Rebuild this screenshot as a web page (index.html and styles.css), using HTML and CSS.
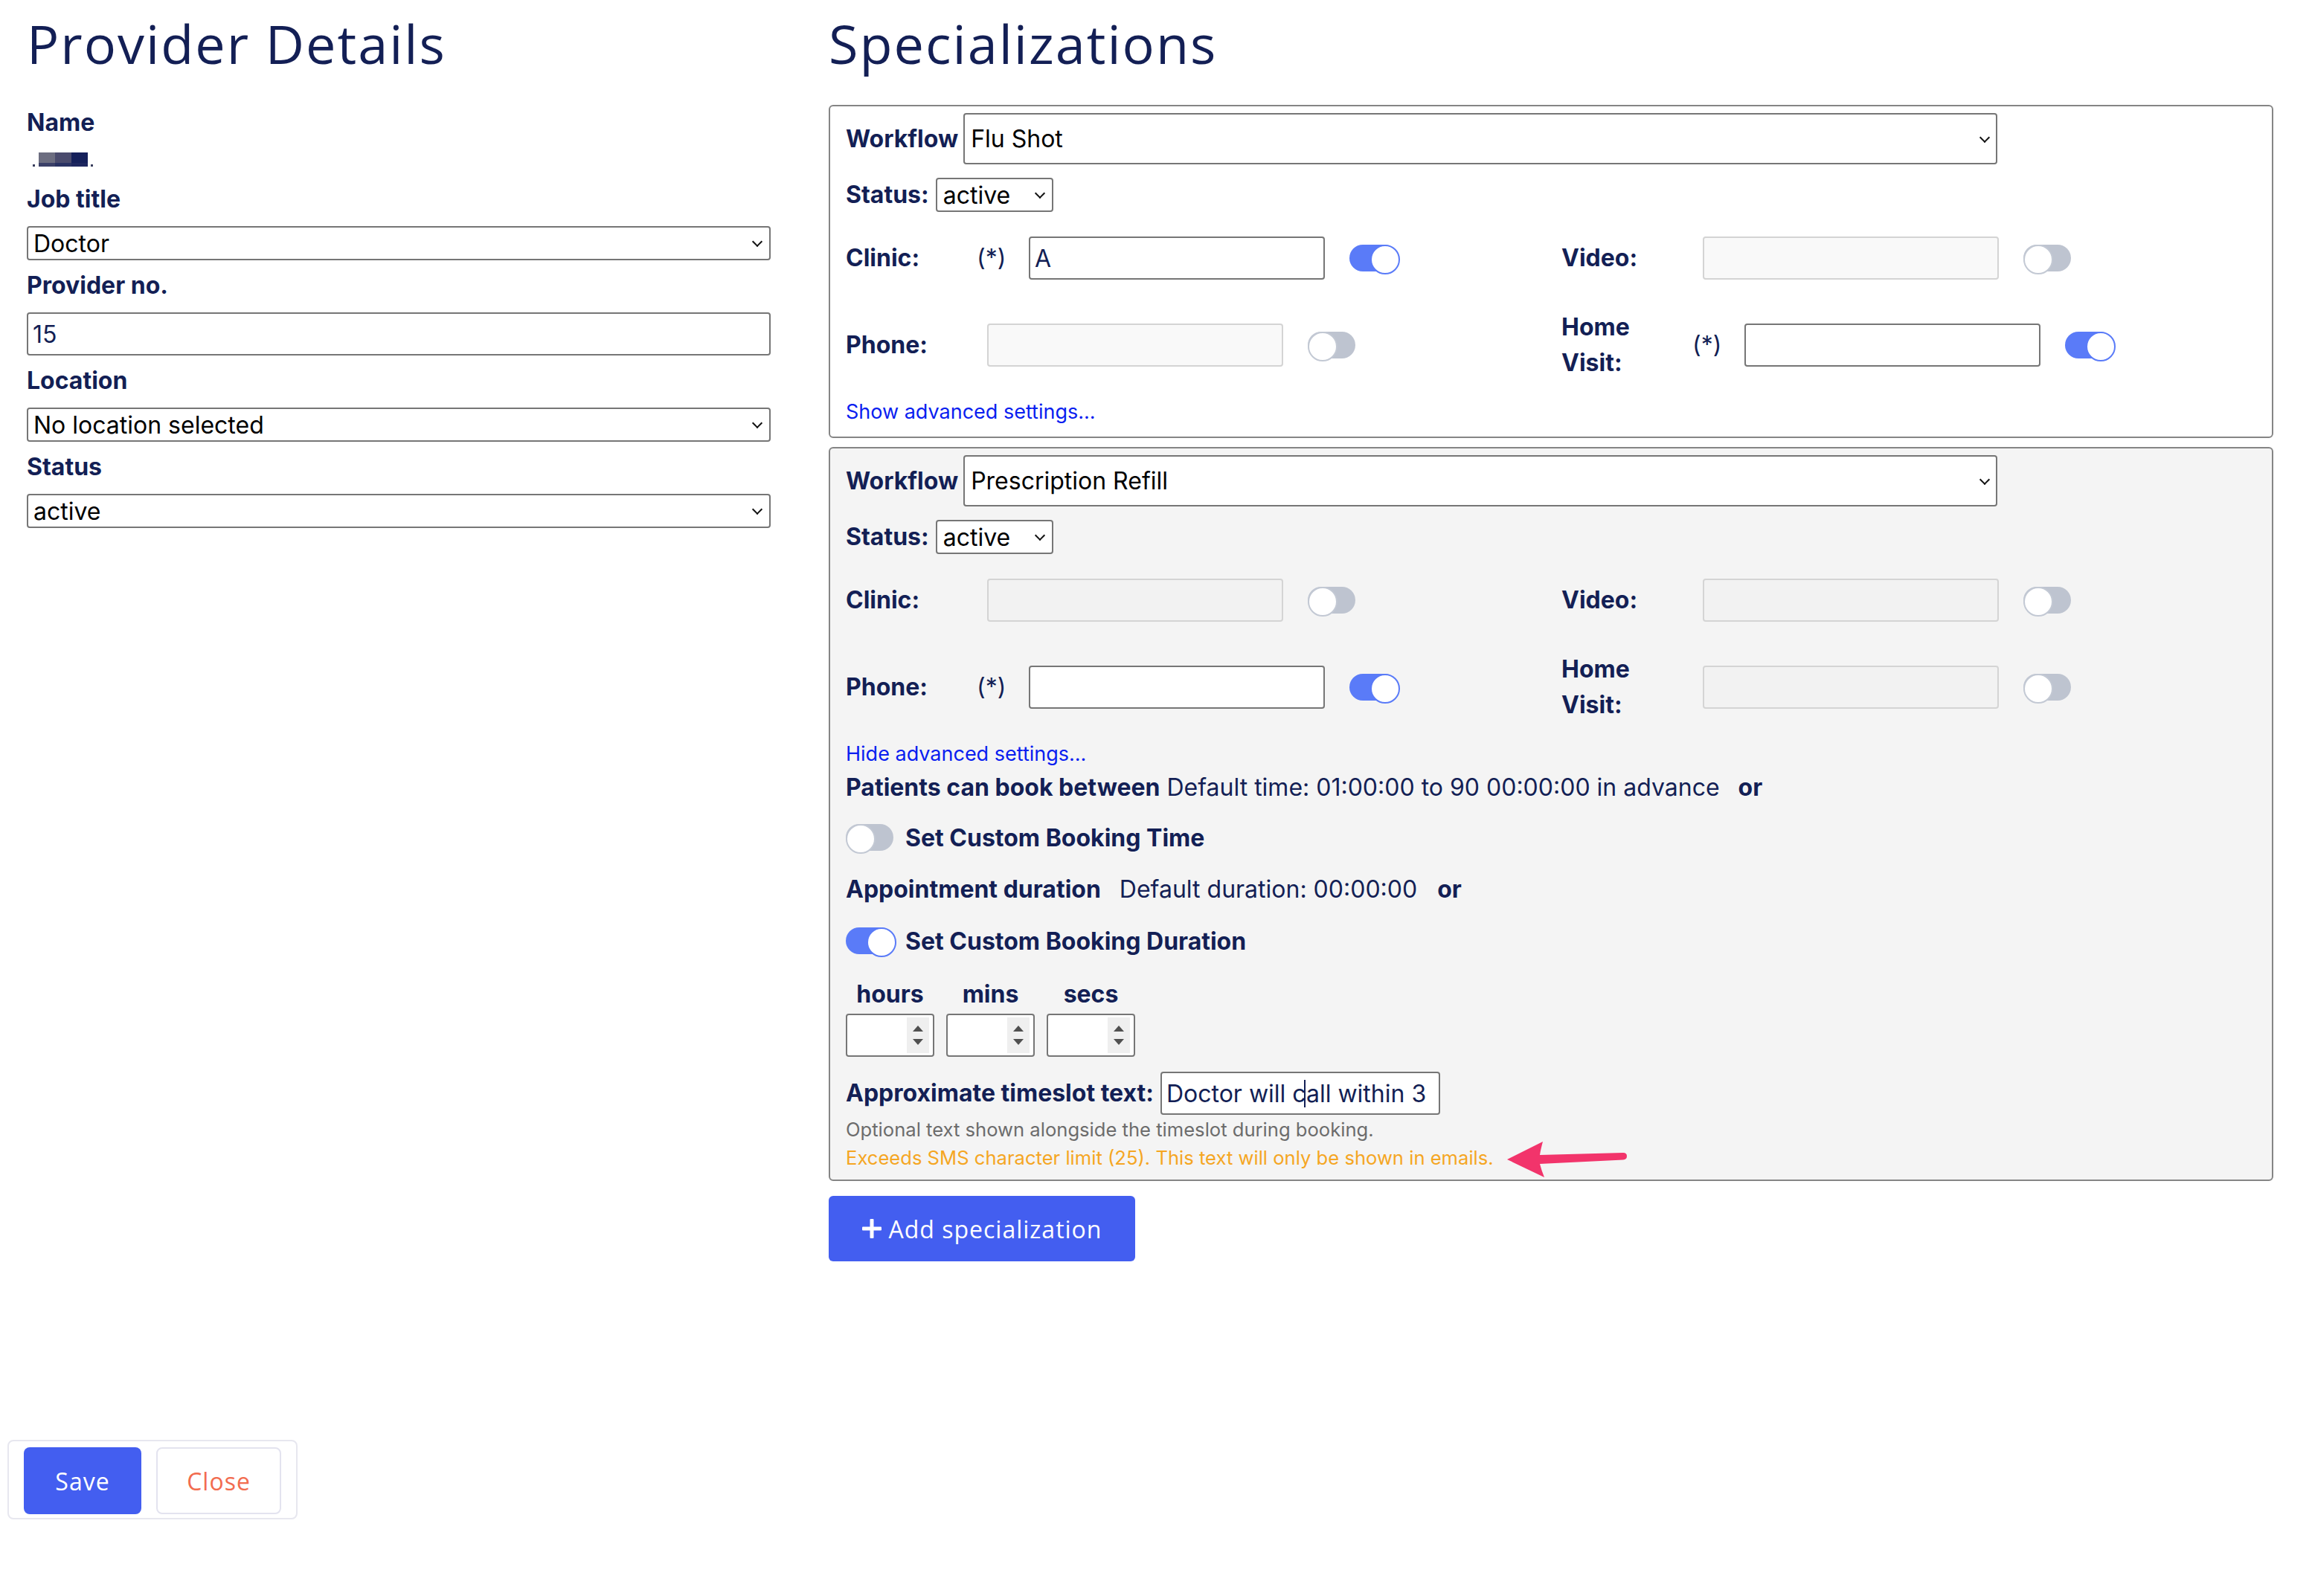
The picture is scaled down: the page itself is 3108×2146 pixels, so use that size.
FILE: index.html
```html
<!DOCTYPE html>
<html lang="en">
<head>
<meta charset="utf-8">
<title>Provider Details</title>
<link rel="stylesheet" href="styles.css">
</head>
<body>
<div class="page">
  <main class="layout">
    <!-- Left column: provider form -->
    <section class="details">
      <h1 class="title">Provider Details</h1>

      <div class="label label-name">Name</div>
      <div class="name-value" aria-label="Name (hidden)">
        <span class="dot"></span><span class="blk b1"></span><span class="blk b2"></span><span class="blk b3"></span><span class="dot"></span>
      </div>

      <label class="label" for="job">Job title</label>
      <div class="sel"><select id="job" class="select"><option>Doctor</option></select></div>

      <label class="label" for="provno">Provider no.</label>
      <input id="provno" class="text-input" value="15">

      <label class="label" for="loc">Location</label>
      <div class="sel"><select id="loc" class="select"><option>No location selected</option></select></div>

      <label class="label" for="status">Status</label>
      <div class="sel"><select id="status" class="select"><option>active</option></select></div>
    </section>

    <!-- Right column: specializations -->
    <section class="specs">
      <h1 class="title">Specializations</h1>

      <div class="card">
        <div class="wf-row">
          <span class="inline-label">Workflow</span>
          <div class="sel wf"><select class="select"><option>Flu Shot</option></select></div>
        </div>
        <div class="status-row">
          <span class="inline-label">Status:</span>
          <div class="sel small"><select class="select"><option>active</option></select></div>
        </div>
        <div class="channels">
          <div class="channel">
            <span class="ch-label">Clinic:</span>
            <span class="req">(*)</span>
            <input class="ch-input" value="A">
            <span class="switch on"></span>
          </div>
          <div class="channel">
            <span class="ch-label">Video:</span>
            <span class="opt"></span>
            <input class="ch-input" disabled>
            <span class="switch"></span>
          </div>
          <div class="channel">
            <span class="ch-label">Phone:</span>
            <span class="opt"></span>
            <input class="ch-input" disabled>
            <span class="switch"></span>
          </div>
          <div class="channel">
            <span class="ch-label">Home Visit:</span>
            <span class="req">(*)</span>
            <input class="ch-input">
            <span class="switch on"></span>
          </div>
        </div>
        <a class="adv-link" href="#">Show advanced settings...</a>
      </div>

      <div class="card muted">
        <div class="wf-row">
          <span class="inline-label">Workflow</span>
          <div class="sel wf"><select class="select"><option>Prescription Refill</option></select></div>
        </div>
        <div class="status-row">
          <span class="inline-label">Status:</span>
          <div class="sel small"><select class="select"><option>active</option></select></div>
        </div>
        <div class="channels">
          <div class="channel">
            <span class="ch-label">Clinic:</span>
            <span class="opt"></span>
            <input class="ch-input" disabled>
            <span class="switch"></span>
          </div>
          <div class="channel">
            <span class="ch-label">Video:</span>
            <span class="opt"></span>
            <input class="ch-input" disabled>
            <span class="switch"></span>
          </div>
          <div class="channel">
            <span class="ch-label">Phone:</span>
            <span class="req">(*)</span>
            <input class="ch-input">
            <span class="switch on"></span>
          </div>
          <div class="channel">
            <span class="ch-label">Home Visit:</span>
            <span class="opt"></span>
            <input class="ch-input" disabled>
            <span class="switch"></span>
          </div>
        </div>
        <a class="adv-link" href="#">Hide advanced settings...</a>

        <p class="book-line"><b>Patients can book between</b> Default time: 01:00:00 to 90 00:00:00 in advance <b class="or">or</b></p>

        <div class="toggle-line"><span class="switch"></span><span>Set Custom Booking Time</span></div>

        <p class="dur-line"><b>Appointment duration</b><span class="sp">Default duration: 00:00:00</span><b class="or">or</b></p>

        <div class="toggle-line toggle-duration"><span class="switch on"></span><span>Set Custom Booking Duration</span></div>

        <div class="hms">
          <div class="hms-col">
            <span class="hms-label">hours</span>
            <div class="num"><input type="number"><span class="spin"></span></div>
          </div>
          <div class="hms-col">
            <span class="hms-label">mins</span>
            <div class="num"><input type="number"><span class="spin"></span></div>
          </div>
          <div class="hms-col">
            <span class="hms-label">secs</span>
            <div class="num"><input type="number"><span class="spin"></span></div>
          </div>
        </div>

        <div class="approx">
          <span class="inline-label">Approximate timeslot text:</span>
          <div class="approx-field">
            <input class="approx-input" value="Doctor will call within 3 hours">
            <span class="caret"></span>
          </div>
        </div>
        <p class="hint">Optional text shown alongside the timeslot during booking.</p>
        <p class="warn">Exceeds SMS character limit (25). This text will only be shown in emails.<svg class="arrow" width="166" height="54" viewBox="0 0 166 54" aria-hidden="true"><path d="M2 27 L50 3 Q47 14 46 21 L158 18 Q163 18 163 22.5 Q163 27 158 27.5 L46 33 Q48 41 52 51 Z" fill="#f2346b"/></svg></p>
      </div>

      <button class="add-btn" type="button">
        <svg class="plus" width="26" height="26" viewBox="0 0 26 26" aria-hidden="true"><rect x="10.5" y="0" width="5" height="26" rx="1" fill="#fff"/><rect x="0" y="10.5" width="26" height="5" rx="1" fill="#fff"/></svg>
        <span>Add specialization</span>
      </button>
    </section>
  </main>

  <footer class="actions">
    <button class="btn btn-save" type="button">Save</button>
    <button class="btn btn-close" type="button">Close</button>
  </footer>
</div>
</body>
</html>
```

FILE: styles.css
```css
* {
  box-sizing: border-box;
}

body {
  margin: 0;
  background: #fff;
  color: #131f55;
  font-family: Inter, "Liberation Sans", sans-serif;
  font-size: 32px;
}

.page {
  min-height: 100vh;
  display: flex;
  flex-direction: column;
}

.layout {
  display: grid;
  grid-template-columns: 1000px 1fr;
  column-gap: 78px;
  align-items: start;
  padding: 14px 52px 0 36px;
}

.title {
  margin: 0 0 39px;
  font-family: "Open Sans", sans-serif;
  font-weight: 500;
  font-size: 72px;
  line-height: 88px;
  letter-spacing: 2px;
  color: #131f55;
}

/* ---------- left form ---------- */

.label {
  display: block;
  margin-bottom: 12px;
  font-weight: 700;
  font-size: 32px;
  line-height: 48px;
}

.label-name {
  margin-bottom: 0;
}

.name-value {
  height: 44px;
  margin-bottom: 11px;
  padding: 0 0 9px 8px;
  display: flex;
  align-items: flex-end;
}

.name-value .dot {
  width: 3px;
  height: 3px;
  background: #3a3f5e;
}

.name-value .dot:first-child {
  margin-right: 5px;
}

.name-value .dot:last-child {
  margin-left: 4px;
}

.name-value .blk {
  width: 22px;
  height: 19px;
}

.b1 { background: linear-gradient(#6c6d80 0 14px, #3b4068 14px); }
.b2 { background: linear-gradient(#4a4b6d 0 14px, #2a3263 14px); }
.b3 { background: linear-gradient(#15205a 0 14px, #1e275f 14px); }

.sel {
  position: relative;
  margin-bottom: 10px;
}

.sel::after {
  content: "";
  position: absolute;
  right: 13px;
  top: 50%;
  width: 8px;
  height: 8px;
  border-right: 2px solid #111;
  border-bottom: 2px solid #111;
  transform: translateY(-70%) rotate(45deg);
  pointer-events: none;
}

.select {
  -webkit-appearance: none;
  appearance: none;
  display: block;
  width: 100%;
  height: 46px;
  margin: 0;
  padding: 0 40px 0 7px;
  border: 2px solid #767676;
  border-radius: 4px;
  background: #fff;
  color: #000;
  font-family: Inter, "Liberation Sans", sans-serif;
  font-size: 32px;
}

.text-input {
  display: block;
  width: 100%;
  height: 58px;
  margin: 0 0 10px;
  padding: 0 6px;
  border: 2px solid #767676;
  border-radius: 4px;
  background: #fff;
  color: #131f55;
  font-family: Inter, "Liberation Sans", sans-serif;
  font-size: 32px;
}

/* ---------- specialization cards ---------- */

.card {
  border: 2px solid #858585;
  border-radius: 6px;
  padding: 9px 21px 13px;
  background: #fff;
}

.card + .card {
  margin-top: 12px;
}

.card.muted {
  background: #f4f4f4;
  padding-bottom: 10px;
}

.inline-label {
  font-weight: 700;
  font-size: 32px;
  line-height: 48px;
  white-space: nowrap;
}

.wf-row {
  display: flex;
  align-items: center;
  gap: 7px;
}

.sel.wf {
  width: 1390px;
  margin: 0;
}

.sel.wf .select {
  height: 69px;
  padding-left: 8px;
}

.sel.wf::after {
  right: 12px;
}

.status-row {
  display: flex;
  align-items: center;
  gap: 9px;
  margin-top: 17px;
}

.sel.small {
  width: 158px;
  margin: 0;
}

.sel.small .select {
  padding-left: 8px;
}

.channels {
  display: grid;
  grid-template-columns: 962px 1fr;
  row-gap: 21px;
  margin-top: 13px;
}

.channel {
  display: flex;
  align-items: center;
  min-height: 96px;
}

.ch-label {
  flex: 0 0 176px;
  padding-right: 30px;
  font-weight: 700;
  font-size: 32px;
  line-height: 48px;
}

.req {
  flex: 0 0 70px;
  font-size: 32px;
  line-height: 48px;
}

.opt {
  flex: 0 0 14px;
}

.ch-input {
  flex: none;
  width: 398px;
  height: 58px;
  margin: 0;
  padding: 0 6px;
  border: 2px solid #767676;
  border-radius: 4px;
  background: #fff;
  color: #131f55;
  font-family: Inter, "Liberation Sans", sans-serif;
  font-size: 32px;
}

.ch-input:disabled {
  border-color: #d4d4d4;
  background: rgba(239, 239, 239, 0.4);
}

.channel .switch {
  margin-left: 33px;
}

/* toggle switch */
.switch {
  position: relative;
  flex: none;
  display: inline-block;
  width: 64px;
  height: 36px;
  border-radius: 18px;
  background: #bec4d0;
}

.switch::after {
  content: "";
  position: absolute;
  top: 0;
  left: 0;
  width: 36px;
  height: 36px;
  border-radius: 50%;
  border: 2px solid #c3c9d4;
  background: #fff;
}

.switch.on {
  background: #5a7bf8;
}

.switch.on::after {
  left: 28px;
  border-color: #5a7bf8;
}

.adv-link {
  display: block;
  margin-top: 22px;
  font-size: 27px;
  line-height: 40px;
  color: #0a1ef0;
  text-decoration: none;
}

/* ---------- advanced settings ---------- */

.book-line {
  margin: 1px 0 0;
  font-size: 32px;
  line-height: 48px;
}

.or {
  margin-left: 16px;
}

.toggle-line {
  display: flex;
  align-items: center;
  gap: 16px;
  height: 48px;
  margin-top: 19px;
  font-weight: 700;
  font-size: 32px;
}

.toggle-line.toggle-duration {
  margin-top: 21px;
}

.dur-line {
  margin: 22px 0 0;
  font-size: 32px;
  line-height: 48px;
}

.dur-line .sp {
  margin-left: 25px;
}

.dur-line .or {
  margin-left: 27px;
}

.hms {
  display: flex;
  gap: 16px;
  margin-top: 24px;
}

.hms-col {
  width: 119px;
  display: flex;
  flex-direction: column;
  align-items: center;
}

.hms-label {
  font-weight: 700;
  font-size: 32px;
  line-height: 48px;
}

.num {
  position: relative;
  width: 119px;
  height: 58px;
  margin-top: 2px;
}

.num input {
  -moz-appearance: textfield;
  appearance: textfield;
  width: 100%;
  height: 100%;
  margin: 0;
  padding: 0 40px 0 6px;
  border: 2px solid #767676;
  border-radius: 4px;
  background: #fff;
  font-family: Inter, "Liberation Sans", sans-serif;
  font-size: 32px;
}

.num input::-webkit-inner-spin-button,
.num input::-webkit-outer-spin-button {
  -webkit-appearance: none;
  margin: 0;
}

.spin {
  position: absolute;
  top: 5px;
  bottom: 5px;
  right: 7px;
  width: 30px;
  background: #efefef;
  display: flex;
  flex-direction: column;
  justify-content: space-evenly;
  align-items: center;
}

.spin::before {
  content: "";
  border-left: 7px solid transparent;
  border-right: 7px solid transparent;
  border-bottom: 8px solid #505050;
}

.spin::after {
  content: "";
  border-left: 7px solid transparent;
  border-right: 7px solid transparent;
  border-top: 8px solid #505050;
}

.approx {
  display: flex;
  align-items: center;
  gap: 9px;
  margin-top: 20px;
}

.approx-field {
  position: relative;
}

.approx-input {
  display: block;
  width: 376px;
  height: 58px;
  margin: 0;
  padding: 0 6px;
  border: 2px solid #767676;
  border-radius: 4px;
  background: #fff;
  color: #131f55;
  font-family: Inter, "Liberation Sans", sans-serif;
  font-size: 32px;
}

.caret {
  position: absolute;
  left: 193px;
  top: 11px;
  width: 2px;
  height: 37px;
  background: #131f55;
}

.hint,
.warn {
  margin: 0;
  font-size: 25.6px;
  line-height: 38px;
}

.hint {
  margin-top: 1px;
  color: #6c6c6c;
}

.warn {
  color: #f5a623;
}

.arrow {
  vertical-align: middle;
  margin: -20px 0 -20px 16px;
}

.add-btn {
  display: flex;
  align-items: center;
  justify-content: center;
  gap: 10px;
  width: 412px;
  height: 88px;
  margin-top: 20px;
  border: 0;
  border-radius: 6px;
  background: #435ef0;
  color: #fff;
  font-family: "Open Sans", sans-serif;
  font-size: 32px;
  letter-spacing: 1px;
}

/* ---------- footer actions ---------- */

.actions {
  align-self: flex-start;
  display: flex;
  gap: 20px;
  margin: auto 0 103px 10px;
  padding: 8px 20px 5px;
  border: 2px solid #e7e7ef;
  border-radius: 8px;
  background: #fff;
}

.btn {
  height: 90px;
  border-radius: 8px;
  font-family: "Open Sans", sans-serif;
  font-size: 32px;
  letter-spacing: 1px;
}

.btn-save {
  width: 158px;
  border: 0;
  background: #435ef0;
  color: #fff;
}

.btn-close {
  width: 168px;
  border: 2px solid #e3e3ef;
  background: #fff;
  color: #f26c4f;
}
```
